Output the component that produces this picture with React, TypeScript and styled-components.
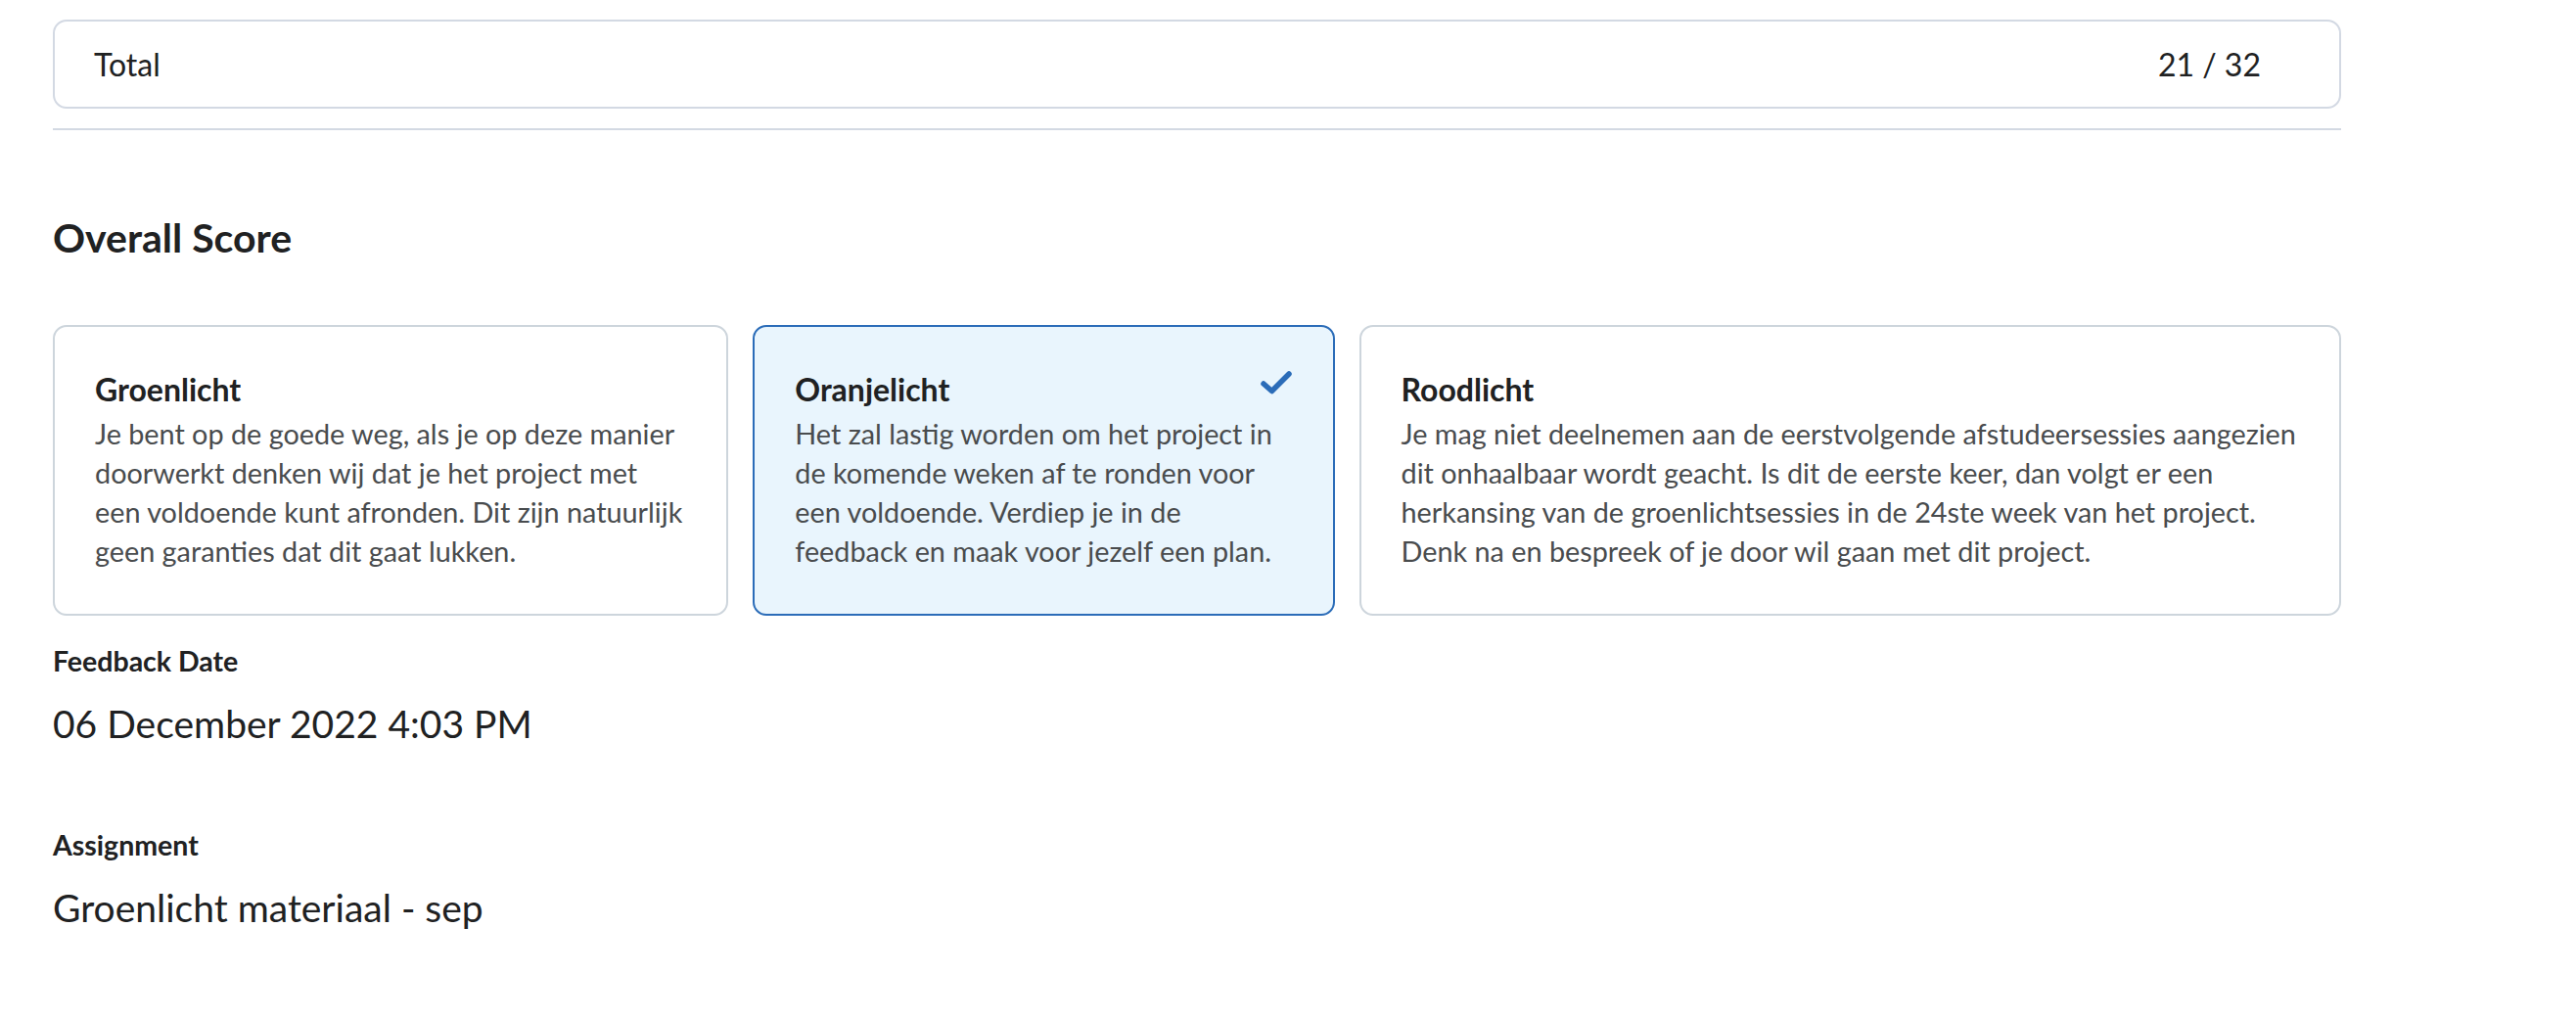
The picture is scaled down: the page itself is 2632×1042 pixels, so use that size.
import React from "react";
import styled, { createGlobalStyle } from "styled-components";

const Global = createGlobalStyle`
  html, body { margin: 0; padding: 0; background: #ffffff; }
  body { font-family: Lato, "Open Sans", sans-serif; color: #202122; }
  * { box-sizing: border-box; }
`;

const Page = styled.div`
  width: 2632px;
  padding: 20px 240px 40px 54px;
  display: flex;
  flex-direction: column;
`;

const TotalBox = styled.div`
  display: flex;
  justify-content: space-between;
  align-items: center;
  border: 2px solid #d3d9e3;
  border-radius: 14px;
  padding: 23px 80px 23px 40px;
  font-size: 32px;
  line-height: 41px;
  color: #202122;
`;

const Separator = styled.hr`
  margin: 20px 0 0;
  border: none;
  height: 2px;
  background: #d3d9e3;
`;

const Heading = styled.h2`
  margin: 86px 0 0;
  font-size: 41px;
  line-height: 48px;
  font-weight: 700;
  color: #202122;
`;

const Levels = styled.div`
  display: grid;
  grid-template-columns: 690fr 594fr 1003fr;
  column-gap: 25px;
  margin-top: 65px;
`;

const Level = styled.div<{ $selected?: boolean }>`
  border: 2px solid ${(p) => (p.$selected ? "#2b6cb8" : "#cdd5dc")};
  background: ${(p) => (p.$selected ? "#e9f5fd" : "#ffffff")};
  border-radius: 14px;
  padding: 44px 41px;
  display: flex;
  flex-direction: column;
`;

const TitleRow = styled.div`
  display: flex;
  justify-content: space-between;
  align-items: flex-start;
  margin-bottom: 5px;
`;

const LevelTitle = styled.div`
  font-size: 32px;
  line-height: 40px;
  font-weight: 700;
  color: #202122;
`;

const LevelText = styled.div`
  font-size: 28.8px;
  line-height: 40px;
  color: #494c4e;
`;

const Field = styled.div<{ $top: number }>`
  margin-top: ${(p) => p.$top}px;
  display: flex;
  flex-direction: column;
`;

const FieldLabel = styled.div`
  font-size: 28.5px;
  line-height: 34px;
  font-weight: 700;
  color: #202122;
`;

const FieldValue = styled.div`
  margin-top: 24px;
  font-size: 39px;
  line-height: 46px;
  color: #202122;
`;

const Check = () => (
  <svg width="34" height="26" viewBox="0 0 34 26" fill="none">
    <path
      d="M4 14 L12.5 21.5 L30 4"
      stroke="#2b6cb8"
      strokeWidth="5.5"
      strokeLinecap="round"
      strokeLinejoin="round"
    />
  </svg>
);

const levels = [
  {
    title: "Groenlicht",
    text: "Je bent op de goede weg, als je op deze manier doorwerkt denken wij dat je het project met een voldoende kunt afronden. Dit zijn natuurlijk geen garanties dat dit gaat lukken.",
    selected: false,
  },
  {
    title: "Oranjelicht",
    text: "Het zal lastig worden om het project in de komende weken af te ronden voor een voldoende. Verdiep je in de feedback en maak voor jezelf een plan.",
    selected: true,
  },
  {
    title: "Roodlicht",
    text: "Je mag niet deelnemen aan de eerstvolgende afstudeersessies aangezien dit onhaalbaar wordt geacht. Is dit de eerste keer, dan volgt er een herkansing van de groenlichtsessies in de 24ste week van het project. Denk na en bespreek of je door wil gaan met dit project.",
    selected: false,
  },
];

export default function App() {
  return (
    <>
      <Global />
      <Page>
        <TotalBox>
          <span>Total</span>
          <span>21 / 32</span>
        </TotalBox>
        <Separator />
        <Heading>Overall Score</Heading>
        <Levels>
          {levels.map((l) => (
            <Level key={l.title} $selected={l.selected}>
              <TitleRow>
                <LevelTitle>{l.title}</LevelTitle>
                {l.selected && <Check />}
              </TitleRow>
              <LevelText>{l.text}</LevelText>
            </Level>
          ))}
        </Levels>
        <Field $top={29}>
          <FieldLabel>Feedback Date</FieldLabel>
          <FieldValue>06 December 2022 4:03 PM</FieldValue>
        </Field>
        <Field $top={84}>
          <FieldLabel>Assignment</FieldLabel>
          <FieldValue>Groenlicht materiaal - sep</FieldValue>
        </Field>
      </Page>
    </>
  );
}
